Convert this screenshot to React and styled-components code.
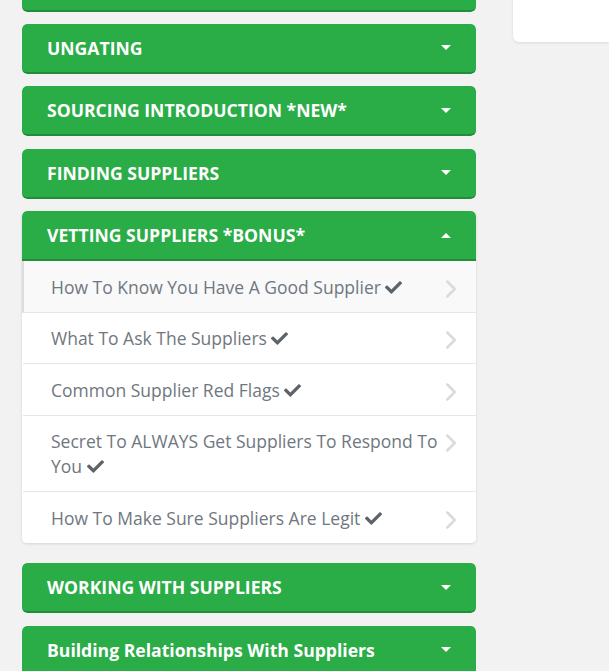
import React from 'react'
import styled, { createGlobalStyle } from 'styled-components'
import { FaCheck } from 'react-icons/fa'
import { ChevronRight } from 'lucide-react'

const Global = createGlobalStyle`
  html, body {
    margin: 0;
    padding: 0;
    background: #f2f2f2;
    font-family: "Open Sans", "Liberation Sans", sans-serif;
  }
`

const sections = [
  { title: 'PRODUCT RESEARCH' },
  { title: 'UNGATING' },
  { title: 'SOURCING INTRODUCTION *NEW*' },
  { title: 'FINDING SUPPLIERS' },
  {
    title: 'VETTING SUPPLIERS *BONUS*',
    open: true,
    lessons: [
      'How To Know You Have A Good Supplier',
      'What To Ask The Suppliers',
      'Common Supplier Red Flags',
      'Secret To ALWAYS Get Suppliers To Respond To You',
      'How To Make Sure Suppliers Are Legit',
    ],
  },
  { title: 'WORKING WITH SUPPLIERS' },
  { title: 'Building Relationships With Suppliers' },
]

export default function App() {
  return (
    <>
      <Global />
      <Page>
        <Sections>
          {sections.map((s, i) => (
            <Panel key={i} $open={s.open}>
              <Header $open={s.open}>
                <span>{s.title}</span>
                <Caret $up={s.open} />
              </Header>
              {s.open && (
                <Lessons>
                  {s.lessons.map((l, j) => (
                    <Lesson key={j} $active={j === 0}>
                      <LessonText>
                        {l} <Check />
                      </LessonText>
                      <Arrow size={30} strokeWidth={2} />
                    </Lesson>
                  ))}
                </Lessons>
              )}
            </Panel>
          ))}
        </Sections>
        <Side />
      </Page>
    </>
  )
}

const Page = styled.div`
  display: grid;
  grid-template-columns: 454px 1fr;
  column-gap: 37px;
  align-items: start;
  padding-left: 22px;
  margin-top: -38.5px;
`

const Sections = styled.div`
  display: flex;
  flex-direction: column;
  gap: 12.4px;
`

const Panel = styled.div`
  border-radius: 5px;
  overflow: hidden;
  background: #fff;
  box-shadow: ${p => (p.$open ? '0 1px 3px rgba(0,0,0,0.12)' : 'none')};
  margin-bottom: ${p => (p.$open ? '8.5px' : '0')};
`

const Header = styled.div`
  height: 48px;
  box-sizing: content-box;
  background: #2aac47;
  border-bottom: 2px solid #238c3a;
  border-radius: ${p => (p.$open ? '5px 5px 0 0' : '5px')};
  display: flex;
  align-items: center;
  justify-content: space-between;
  padding: 0 25px;
  color: #fff;
  font-weight: 700;
  font-size: 17.6px;
`

const Caret = styled.span`
  width: 0;
  height: 0;
  border-left: 5px solid transparent;
  border-right: 5px solid transparent;
  ${p => (p.$up ? 'border-bottom: 5px solid #fff;' : 'border-top: 5px solid #fff;')}
`

const Lessons = styled.div`
  display: flex;
  flex-direction: column;
`

const Lesson = styled.div`
  display: flex;
  align-items: flex-start;
  justify-content: space-between;
  padding: 13.5px 10px 12px 27px;
  border-left: 2px solid ${p => (p.$active ? '#dcdcdc' : 'transparent')};
  background: ${p => (p.$active ? '#f9f9f9' : '#fff')};
  border-bottom: 1px solid #e6e6e6;
  &:last-child {
    border-bottom: none;
  }
`

const LessonText = styled.div`
  flex: 1;
  font-size: 17.5px;
  line-height: 25px;
  color: #6f7780;
`

const Check = styled(FaCheck)`
  color: #5c636b;
  font-size: 17px;
  vertical-align: -2px;
`

const Arrow = styled(ChevronRight)`
  color: #dadada;
  flex-shrink: 0;
  margin: -1px 0 -4px -4px;
`

const Side = styled.div`
  height: 80px;
  background: #fff;
  border-radius: 0 0 0 6px;
  box-shadow: 0 1px 3px rgba(0,0,0,0.1);
`
